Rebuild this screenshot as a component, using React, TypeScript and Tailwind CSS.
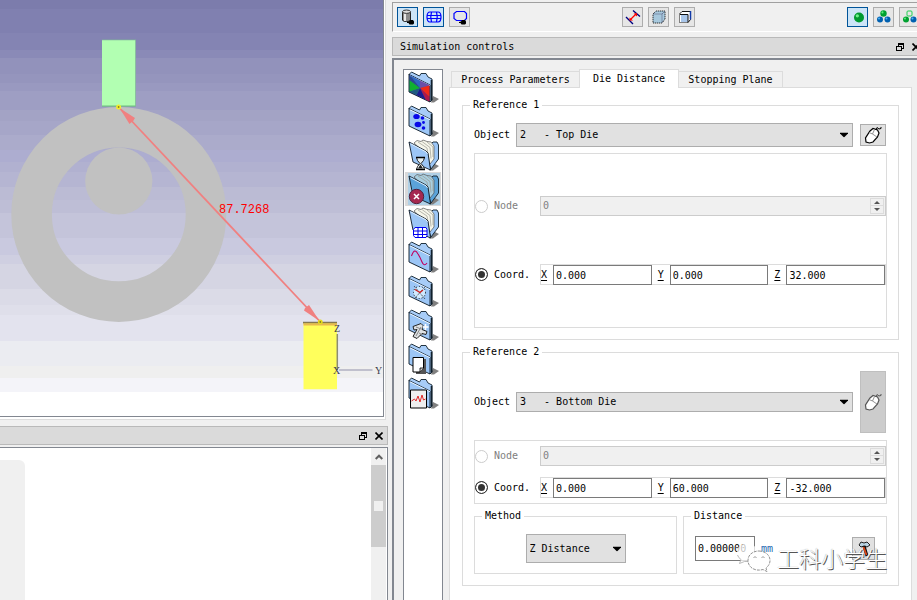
import React from 'react';

type FieldProps = { label: string; value: string };

// upper edge and colour of every band in the viewport backdrop
const BANDS: [number, string][] = [
    [0, '#7c7cac'], [9, '#8080b0'], [33, '#8484b3'], [50, '#8a8ab7'], [58, '#9292bb'],
    [74, '#9595bd'], [83, '#9999c0'], [91, '#9e9ec3'], [110, '#a3a3c5'], [121, '#a6a6c8'],
    [135, '#ababcb'], [150, '#adadd0'], [162, '#b1b1d0'], [172, '#b5b5d2'], [187, '#bbbbd4'],
    [200, '#bebed6'], [213, '#c4c4da'], [238, '#c9c9df'], [255, '#cfcfe1'], [264, '#d5d5e3'],
    [289, '#dbdbe7'], [305, '#dfdfea'], [315, '#e3e3ee'], [341, '#ebecf1'], [366, '#efefef'],
    [378, '#f4f4f9'], [392, '#ffffff'],
];

const Viewport: React.FC = () => (
    <svg viewBox="0 0 383 416" preserveAspectRatio="xMinYMin slice" className="block h-full w-full" role="img" aria-label="Die distance view">
        {BANDS.map(([y, fill]) => <rect key={y} x="0" y={y} width="383" height={416 - y} fill={fill} shapeRendering="crispEdges" />)}
        <circle cx="118.8" cy="214.4" r="87.2" fill="none" stroke="#c1c1c1" strokeWidth="40.6" />
        <circle cx="118.8" cy="181" r="33.6" fill="#c1c1c1" />
        <path d="M102 39.5h34v67h-34z" fill="#7fae9c" />
        <path d="M102 40.3h33.2V106H102z" fill="#b2ffb2" />
        <path d="M102 106h33.5" stroke="#6fbf7f" />
        <path d="M303.5 322H337v67.3h-33.5z" fill="#ffff5c" />
        <path d="M303 321.5h34" stroke="#c9c9c9" />
        <path d="M303 322.7h34" stroke="#86784f" strokeWidth="1.4" />
        <path d="M303.5 324.5h33.5" stroke="#e9b94f" strokeWidth="2" />
        <path d="M337.3 334v36" stroke="#8c8c74" strokeWidth="1.5" />
        <path d="M339 370h33.5" stroke="#b0b0c2" strokeWidth="1.7" />
        <path d="M119 107.5L320 321.5" stroke="#f08080" strokeWidth="1.8" />
        <path d="M119.5 108l15.500 10-1.500 2.500-4 3.500z" fill="#f08080" />
        <path d="M319.5 321l-15.500-10.500 1-2.500 4-3z" fill="#f08080" />
        <circle cx="118.6" cy="107" r="1.7" fill="#8a8320" stroke="#f4ec2a" strokeWidth="1.6" />
        <circle cx="320.3" cy="322" r="1.7" fill="#8a8320" stroke="#e6dc1c" strokeWidth="1.6" />
        <text x="219" y="213" fill="#ff0000" fontFamily="Liberation Mono, monospace" fontSize="12">87.7268</text>
        <g fill="#3c3c4c" fontFamily="Liberation Serif, serif" fontSize="10">
            <text x="334" y="332">Z</text>
            <text x="333" y="374">X</text>
            <text x="375" y="374">Y</text>
        </g>
    </svg>
);

const DockTitle: React.FC<{ title?: string; className?: string }> = ({ title, className = 'border' }) => (
    <div className={`flex h-[19px] shrink-0 items-center gap-2 border-[#b9b9b9] bg-[#dadada] pl-[7px] pr-1 ${className}`}>
        <h2 className="flex-1">{title}</h2>
        <button aria-label="Float" className="size-2">
            <svg viewBox="0 0 8 8" className="size-2" fill="none" stroke="#000" shapeRendering="crispEdges">
                <path d="M2.500 3V0.500h5v5H6M2 1h6M.5 3.500h5v4h-5zM0 3.500h6" />
            </svg>
        </button>
        <button aria-label="Close" className="size-2">
            <svg viewBox="0 0 8 8" className="size-2" stroke="#000" strokeWidth="1.6">
                <path d="M.5.5l7 7M7.500.5l-7 7" />
            </svg>
        </button>
    </div>
);

const Tool: React.FC<{ label: string; active?: boolean; children: React.ReactNode }> = ({ label, active, children }) => (
    <button
        aria-label={label}
        aria-pressed={!!active}
        className={`flex h-5 w-[21px] shrink-0 items-center justify-center border ${active ? 'border-[#005499] bg-[#cce4f7]' : 'border-[#adadad] bg-[#e6e6e6]'}`}
    >
        <svg viewBox="0 0 16 16" className="size-4 shrink-0" fill="none">{children}</svg>
    </button>
);

const MouseShadow: React.FC = () => (
    <path d="M7 13l2-.5 1-1.500h3l1 1.500v2l-1 1H9.500l-1-1.500H7z" fill="#000" />
);

const Ball: React.FC<{ x: number; y: number; r: number; color: string; light: string }> = ({ x, y, r, color, light }) => (
    <>
        <circle cx={x} cy={y} r={r} fill={color} />
        <circle cx={x - r / 3} cy={y - r / 3} r={r / 3} fill={light} />
    </>
);

const Toolbar: React.FC = () => (
    <div className="flex h-[30px] shrink-0 items-center justify-between border-b border-l border-t border-b-white border-l-[#a0a0a0] border-t-[#a0a0a0] pl-1 pr-[5px] pb-1 pt-1">
        <div className="flex gap-[5px]">
            <Tool label="Shaded" active>
                <path d="M2.500 3v8c0 1 2 1.500 4 1.500s4-.5 4-1.500V3z" fill="#8c8c8c" stroke="#222" />
                <path d="M4 4h2v8H4z" fill="#e8e8e8" />
                <ellipse cx="6.500" cy="2.700" rx="4" ry="1.700" fill="#ddd" stroke="#333" />
                <MouseShadow />
            </Tool>
            <Tool label="Mesh" active>
                <path d="M4 3h8q3 0 3 5t-3 5H4q-3 0-3-5t3-5zM1 6.500h14M1 9.500h14M5.500 3q-1.500 5 0 10M10.500 3q1.500 5 0 10" stroke="#0000ff" strokeWidth="1.2" />
            </Tool>
            <Tool label="Outline">
                <path d="M4.500 2.500h8l2 2v5l-2 2h-8l-2.500-2v-5z" stroke="#0000ff" strokeWidth="1.2" />
                <MouseShadow />
            </Tool>
        </div>
        <div className="flex gap-[5px]">
            <Tool label="Measure">
                <path d="M8 1.500l7 6M1 8l7 7" stroke="#000080" strokeWidth="1.4" />
                <path d="M5 11l6.500-6.500" stroke="#ff0000" strokeWidth="1.3" />
                <path d="M4.500 8.500v3H8zM12 7.500v-3H8.500z" fill="#ff0000" />
            </Tool>
            <Tool label="Select region">
                <path d="M2 5l3-3h9v8l-3 4H2z" fill="#a7c8dd" stroke="#000" strokeDasharray="1 1" />
                <path d="M2.500 5h8.500v8.500M11 5l3-3" stroke="#557" strokeDasharray="1 1" />
            </Tool>
            <Tool label="Select box">
                <path d="M2 5l3-3h9v8l-3 4H2z" fill="#fff" />
                <path d="M4 6h7v7H4z" fill="#a9c6ea" />
                <path d="M2.500 5.500v8h8.500" stroke="#000" strokeDasharray="1 1" />
                <path d="M2.500 5L5 2.500h8.500v8L11 13.500V5.500H3" stroke="#111" />
                <path d="M13.500 2v8.500" stroke="#123aa8" strokeWidth="1.5" />
            </Tool>
        </div>
        <div className="flex gap-[5px]">
            <Tool label="Single object" active>
                <Ball x={9} y={8.5} r={5} color="#009a30" light="#6df08a" />
            </Tool>
            <Tool label="All objects">
                <Ball x={7.5} y={4.5} r={3.2} color="#00a030" light="#5cf07e" />
                <Ball x={4} y={10.5} r={3} color="#0060b0" light="#4cb4f4" />
                <Ball x={11.5} y={10.5} r={3} color="#0060b0" light="#4cb4f4" />
            </Tool>
            <Tool label="Other objects">
                <rect x="5" y="2" width="5" height="5" rx="1" stroke="#20d050" />
                <Ball x={4} y={10.5} r={3} color="#00a030" light="#5cf07e" />
                <Ball x={11.5} y={10.5} r={3} color="#0060b0" light="#4cb4f4" />
            </Tool>
        </div>
    </div>
);

const ClosedFolder: React.FC<{ front?: string }> = ({ front = '#9cc6f6' }) => (
    <>
        <path d="M25 25l6 3-5 3.500h-3z" fill="#808080" />
        <path d="M1 3.500L3.500 1l8 4L13 2.500h5L20 6l4 2v21l-2 2z" fill="#a8cdf8" stroke="#10202c" strokeWidth=".9" />
        <path d="M1 3.500l21 10.500v17L1 21z" fill={front} stroke="#0c1824" strokeWidth=".9" />
        <path d="M2 4.800l20 9.900" stroke="#e8f4ff" />
        <path d="M23.500 9v20.500" stroke="#10202c" strokeWidth="1.6" />
    </>
);

const OpenFolder: React.FC<{ fill?: string; paper?: string }> = ({ fill = '#9cc6f6', paper = '#f6f6ea' }) => (
    <>
        <path d="M25 24l6 3-6 4.500h-4z" fill="#808080" />
        <path d="M22 6l3-3h4l1.500 3v14L23 30l-3-8z" fill={fill} stroke="#10202c" strokeWidth=".9" />
        <path d="M6 4l3-2.500 4 1 2-1.500 4 1.500 4 .5 3 4v13l-4 5-3-9z" fill={paper} stroke="#555" strokeWidth=".7" />
        <path d="M10 3l9 6 2 12M14 2.500l8 6 1 11M19 3l6 5v10" fill="none" stroke="#9a9a90" strokeWidth=".7" />
        <path d="M1 3l3 1.500L18 12l2 2 2.500 17L5 23z" fill={fill} stroke="#0c1824" strokeWidth=".9" />
        <path d="M2.500 4.700L18 12.800l1.500 2" fill="none" stroke="#e8f4ff" strokeWidth=".9" />
    </>
);

const SIDE_ITEMS: { label: string; icon: React.ReactNode }[] = [
    {
        label: 'Simulation',
        icon: (
            <>
                <ClosedFolder front="#4058a0" />
                <path d="M1.500 4l10.500 5.500v7.500z" fill="#2f66c0" />
                <path d="M12 9.500l9.500 4.500v1L12 17z" fill="#6a50a8" />
                <path d="M12 17l9.500-2.500V26z" fill="#f02a18" />
                <path d="M12 17l9.500 9v4.500l-4-2z" fill="#b01848" />
                <path d="M12 17l5.500 11.500-9-4.500z" fill="#1c1c90" />
                <path d="M12 17l-3.500 7-7-3.500z" fill="#1e5a80" />
                <path d="M12 17L1.500 20.500V9z" fill="#10b030" />
                <path d="M12 17L1.500 9V4z" fill="#2a4a90" />
            </>
        ),
    },
    {
        label: 'Material',
        icon: (
            <>
                <ClosedFolder />
                <g fill="#0808e8">
                    <ellipse cx="8.500" cy="11.500" rx="3.200" ry="2.600" /><circle cx="14.500" cy="13" r="1.800" />
                    <ellipse cx="10" cy="19.500" rx="3.400" ry="2.800" /><circle cx="15.500" cy="17.500" r="1.400" /><circle cx="15.500" cy="23" r="1.800" />
                </g>
            </>
        ),
    },
    {
        label: 'Step',
        icon: (
            <>
                <OpenFolder />
                <path d="M8.500 18.500h8l-1 3-2.500 3 2.500 3 1 3h-8l1-3 2.500-3-2.500-3z" fill="#e6eef0" stroke="#222" />
                <path d="M8 18.500h9M8 30.500h9" stroke="#000" strokeWidth="1.6" />
                <path d="M12.500 25.500l2.500 4h-5z" fill="#222" />
            </>
        ),
    },
    {
        label: 'Stop',
        icon: (
            <>
                <OpenFolder fill="#5ba3d9" paper="#a9cfe0" />
                <circle cx="8.500" cy="23.500" r="7.200" fill="#a52850" stroke="#50203c" />
                <path d="M6 21l5 5M11 21l-5 5" stroke="#fff" strokeWidth="1.5" />
            </>
        ),
    },
    {
        label: 'Remesh',
        icon: (
            <>
                <OpenFolder />
                <path d="M7 20.500h11l1 2v6l-1 2H7l-1.500-2v-6z" fill="#fff" />
                <path d="M7 20.500h11l1 2v6l-1 2H7l-1.500-2v-6zM5.500 24h13.500M5.500 27.500h13.500M10 20.500v10M14.500 20.500v10" fill="none" stroke="#0000f0" />
            </>
        ),
    },
    {
        label: 'Iteration',
        icon: (
            <>
                <ClosedFolder />
                <path d="M3.500 15q3-9 6.500-2 2 3 4 8t5 1" fill="none" stroke="#c00060" strokeWidth="1.1" />
            </>
        ),
    },
    {
        label: 'Process conditions',
        icon: (
            <>
                <ClosedFolder />
                <circle cx="11.500" cy="17.500" r="6" fill="#d0eaff" stroke="#111" strokeDasharray="1 2" />
                <path d="M6 11l11 13M17 12L7 23" stroke="#333" strokeDasharray="1 1" />
                <path d="M7 14.500l5 3 3-2.500" fill="none" stroke="#d02020" strokeWidth="1.2" />
            </>
        ),
    },
    {
        label: 'Advanced',
        icon: (
            <>
                <ClosedFolder />
                <path d="M5 17.500l8-3 2 2-1 4 5 2-1 3-4-1-5 5-4-2 4-7-3 .5z" fill="#dfe2e4" stroke="#222" />
                <path d="M8 18l5 2M13 18l-5 9M11 24l4 2" stroke="#888" />
                <path d="M17.500 15v6M14.500 18h6" stroke="#fff" strokeWidth="1.5" />
            </>
        ),
    },
    {
        label: 'Control files',
        icon: (
            <>
                <ClosedFolder />
                <path d="M8 16h10v15H8z" fill="#555" />
                <path d="M5 14.500h10.500V25L12 29H5z" fill="#fff" stroke="#000" />
                <path d="M15.500 25H12v4" fill="#ccc" stroke="#000" strokeWidth=".8" />
            </>
        ),
    },
    {
        label: 'Graphs',
        icon: (
            <>
                <ClosedFolder />
                <path d="M2.500 13h16v18h-16z" fill="#eeeeee" stroke="#000" />
                <path d="M3.500 24l3-2 1.500 2 2-5 2 6 2-7 1.500 5 2-1" fill="none" stroke="#e02828" />
            </>
        ),
    },
];

const SideBar: React.FC = () => (
    <nav className="w-10 shrink-0 border border-b-0 border-[#828790] bg-white px-px">
        {SIDE_ITEMS.map((item) => (
            <button
                key={item.label}
                aria-label={item.label}
                className={`flex h-[34px] w-9 items-center pl-[3px] ${item.label === 'Stop' ? 'bg-[#d9d9d9]' : ''}`}
            >
                <svg viewBox="0 0 32 32" className={`size-8 shrink-0 ${item.label === 'Stop' ? 'bg-[#b0d0e6]' : ''}`}>{item.icon}</svg>
            </button>
        ))}
    </nav>
);

const Combo: React.FC<{ label: string; value: string; className: string }> = ({ label, value, className }) => (
    <div className={`relative ${className}`}>
        <select aria-label={label} defaultValue={value} className="h-full w-full appearance-none border border-[#adadad] bg-[#e1e1e1] pl-[3px] pr-5">
            <option value={value}>{value}</option>
        </select>
        <svg viewBox="0 0 8 5" className="pointer-events-none absolute right-[5px] top-1/2 h-[5px] w-2 -translate-y-1/2">
            <path d="M0 0h8v1L4 5 0 1z" />
        </svg>
    </div>
);

const PickButton: React.FC<{ off?: boolean }> = ({ off }) => (
    <button
        aria-label="Pick point"
        disabled={off}
        className={`flex w-[26px] shrink-0 items-center justify-center border ${off ? 'h-[62px] border-[#bfbfbf] bg-[#cccccc]' : 'h-[22px] border-[#adadad] bg-[#e1e1e1]'}`}
    >
        <svg viewBox="0 0 18 18" className="size-[18px] shrink-0" fill="none" stroke={off ? '#555' : '#000'}>
            <path d="M6 5l3-2.500 4.500 1.500 1.500 3-1.500 4L9 16l-3.500 1L2 16l-.5-4z" fill="#fff" strokeWidth="1.2" />
            <path d="M5 6.500l3.500 1.500L13 11M8.500 8l2-4.500" stroke="#888" strokeWidth=".9" />
            <path d="M12 4l1-2.500 2 1.500 2-.5V1" />
        </svg>
    </button>
);

const Radio: React.FC<{ group: string; label: string; checked?: boolean }> = ({ group, label, checked }) => (
    <label className={`flex w-[65px] shrink-0 items-center gap-[6px] ${checked ? '' : 'text-[#808080]'}`}>
        <input
            type="radio"
            name={group}
            defaultChecked={checked}
            disabled={!checked}
            className="size-[13px] appearance-none rounded-full border border-[#333] bg-white checked:bg-[#333] checked:shadow-[inset_0_0_0_2px_white] disabled:border-[#ccc]"
        />
        {label}
    </label>
);

const CoordField: React.FC<FieldProps> = ({ label, value }) => (
    <label className="flex flex-1 items-center gap-[6px]">
        <span className="underline underline-offset-2">{label}</span>
        <input defaultValue={value} className="h-5 w-full min-w-0 border border-[#7a7a7a] bg-white px-[2px] pt-px" />
    </label>
);

const PointBox: React.FC<{ group: string; coords: FieldProps[]; className: string }> = ({ group, coords, className }) => (
    <div className={`flex flex-col border border-[#dcdcdc] ${className}`}>
        <div className="flex items-center">
            <Radio group={group} label="Node" />
            <div className="flex h-5 flex-1 items-center border border-[#cccccc] bg-[#f0f0f0] pr-px">
                <input aria-label="Node number" disabled defaultValue="0" className="min-w-0 flex-1 px-[2px] text-[#808080]" />
                <div className="flex w-[14px] flex-col border border-[#dcdcdc]">
                    <button disabled aria-label="Increase" className="flex h-[7px] items-center justify-center border-b border-[#dcdcdc]">
                        <svg viewBox="0 0 6 3" className="h-[3px] w-[6px]" fill="#555"><path d="M0 3l3-3 3 3z" /></svg>
                    </button>
                    <button disabled aria-label="Decrease" className="flex h-[7px] items-center justify-center">
                        <svg viewBox="0 0 6 3" className="h-[3px] w-[6px]" fill="#555"><path d="M0 0l3 3 3-3z" /></svg>
                    </button>
                </div>
            </div>
        </div>
        <div className="flex items-center">
            <Radio group={group} label="Coord." checked />
            <div className="flex h-[21px] flex-1 items-center gap-[6px] border border-[#dcdcdc]">
                {coords.map((c) => <CoordField key={c.label} {...c} />)}
            </div>
        </div>
    </div>
);

const Group: React.FC<{ title: string; className: string; children: React.ReactNode }> = ({ title, className, children }) => (
    <fieldset className={`relative min-w-0 border border-[#dcdcdc] ${className}`}>
        <legend className="-ml-1 px-[3px] leading-3">{title}</legend>
        {children}
    </fieldset>
);

const Watermark: React.FC = () => (
    <div className="pointer-events-none absolute -right-px bottom-0 flex items-center gap-[6px]" aria-hidden="true">
        <svg viewBox="0 0 36 32" className="h-8 w-9" fill="#fff">
            <path d="M13 2C7 2 2 6 2 11.500c0 3 1.500 5.500 4 7L4.500 22.500l5-2 5 .5 8-10C21 6 18 2 13 2z" fillOpacity=".75" />
            <path d="M2.500 14q1 3 3.500 4.500l-1.500 4 5-2h4" fill="none" stroke="#aaa" strokeWidth=".8" />
            <path d="M24 10c6 0 11 4 11 9.500 0 3-1.500 5.500-4 7.500l1 3.500-4-2c-9 2.500-15-3-15-9S18 10 24 10z" stroke="#777" strokeWidth=".8" strokeDasharray="3 1" />
            <path d="M18.500 17l1.500-1.500 1.500 1.500M26.500 17l1.500-1.500 1.500 1.500" fill="none" stroke="#999" />
        </svg>
        <span className="font-['Noto_Sans_CJK_SC',sans-serif] text-[22px] font-light leading-7 text-white [text-shadow:1px_1px_0_#555,0_0_1px_#888]">工科小学生</span>
    </div>
);

const DieDistance: React.FC = () => (
    <div className="flex-1 border border-b-0 border-[#dcdcdc] bg-white px-3 pt-[11px]">
        <Group title="Reference 1" className="px-[11px] pb-[11px]">
            <div className="flex items-center pb-[6px] pr-px pt-3">
                <span className="w-[42px] shrink-0">Object</span>
                <Combo label="Object" value={'2\u00a0\u00a0\u00a0- Top Die'} className="mr-[7px] h-6 flex-1" />
                <PickButton />
            </div>
            <PointBox
                group="ref1"
                className="gap-12 py-[42px]"
                coords={[{ label: 'X', value: '0.000' }, { label: 'Y', value: '0.000' }, { label: 'Z', value: '32.000' }]}
            />
        </Group>
        <Group title="Reference 2" className="mt-[6px] px-[11px] pb-[11px]">
            <div className="flex items-center pb-[7px] pr-px pt-[13px]">
                <span className="w-[42px] shrink-0">Object</span>
                <Combo label="Object" value={'3\u00a0\u00a0\u00a0- Bottom Die'} className="mr-[7px] h-5 flex-1" />
                <PickButton off />
            </div>
            <PointBox
                group="ref2"
                className="gap-[11px] py-[5px]"
                coords={[{ label: 'X', value: '0.000' }, { label: 'Y', value: '60.000' }, { label: 'Z', value: '-32.000' }]}
            />
            <div className="mt-[6px] grid grid-cols-[203px_1fr] gap-[6px]">
                <Group title="Method" className="px-[11px] pb-[10px]">
                    <div className="flex justify-center pt-3">
                        <Combo label="Method" value="Z Distance" className="h-[29px] w-[100px]" />
                    </div>
                </Group>
                <Group title="Distance" className="px-[11px] pb-[10px]">
                    <div className="flex h-[41px] items-center pt-3">
                        <label className="flex items-center gap-[6px]">
                            <input defaultValue="0.000000" className="h-[25px] w-[60px] border border-[#7a7a7a] px-[2px]" />
                            <span className="text-[#2468b0]">mm</span>
                        </label>
                        <button aria-label="Calculate distance" className="ml-auto flex size-[23px] items-center justify-center border border-[#adadad] bg-[#e1e1e1]">
                            <svg viewBox="0 0 16 16" className="size-4" fill="none">
                                <path d="M3 4l2-3 3 1 3-1 3 3-3 2-3-1-3 1z" fill="#b8d4e4" stroke="#222" />
                                <path d="M8 5l3 10" stroke="#111" strokeWidth="3" />
                                <path d="M7.500 6l3 8" stroke="#e04818" strokeWidth="1.8" />
                            </svg>
                        </button>
                    </div>
                    <Watermark />
                </Group>
            </div>
        </Group>
    </div>
);

const App: React.FC = () => {
    return (
        <main className="flex h-screen gap-1 overflow-hidden bg-[#f0f0f0] font-['DejaVu_Sans_Mono',monospace] text-[10px] leading-3 text-black">
            <section className="flex w-[388px] shrink-0 flex-col">
                <div className="mb-[6px] mr-[2px] flex min-h-0 flex-1 border-b border-r border-[#dcdcdc] bg-white pb-[2px] pr-px">
                    <div className="min-w-0 flex-1 border-b border-r border-[#828790]">
                        <Viewport />
                    </div>
                </div>
                <DockTitle className="border-y border-r" />
                <div className="mt-[2px] flex h-[153px] shrink-0 border-r border-t border-[#828790] bg-white">
                    <div className="mt-3 w-[25px] rounded-tr-md bg-[#f0f0f0]" />
                    <div className="ml-auto mr-px flex w-[15px] flex-col bg-[#f0f0f0]">
                        <button aria-label="Scroll up" className="flex h-[17px] items-center justify-center">
                            <svg viewBox="0 0 8 6" className="h-[6px] w-2" fill="none" stroke="#606060" strokeWidth="2"><path d="M.7 5L4 1.700 7.300 5" /></svg>
                        </button>
                        <div className="flex h-[82px] items-center justify-center bg-[#cdcdcd]">
                            <div className="h-[10px] w-[9px] bg-[#f0f0f0]" />
                        </div>
                    </div>
                </div>
            </section>

            <section className="flex min-w-0 flex-1 flex-col pt-[2px]">
                <div className="-mr-2 flex flex-col gap-[5px]">
                    <Toolbar />
                    <DockTitle title="Simulation controls" />
                </div>
                <div className="mt-[2px] flex min-h-0 flex-1 gap-[6px] border-l-2 border-t-2 border-[#828790] pl-[9px] pr-[5px] pt-[9px]">
                    <SideBar />
                    <div className="flex min-w-0 flex-1 flex-col">
                        <div role="tablist" className="flex items-end pl-[2px]">
                            <button role="tab" className="h-4 w-32 border border-b-0 border-r-0 border-[#dcdcdc]">Process Parameters</button>
                            <button role="tab" aria-selected="true" className="relative -mb-px h-[19px] w-[100px] border border-b-0 border-[#dcdcdc] bg-white">Die Distance</button>
                            <button role="tab" className="h-4 w-[104px] border border-b-0 border-l-0 border-[#dcdcdc]">Stopping Plane</button>
                        </div>
                        <DieDistance />
                    </div>
                </div>
            </section>
        </main>
    );
};

export default App;
